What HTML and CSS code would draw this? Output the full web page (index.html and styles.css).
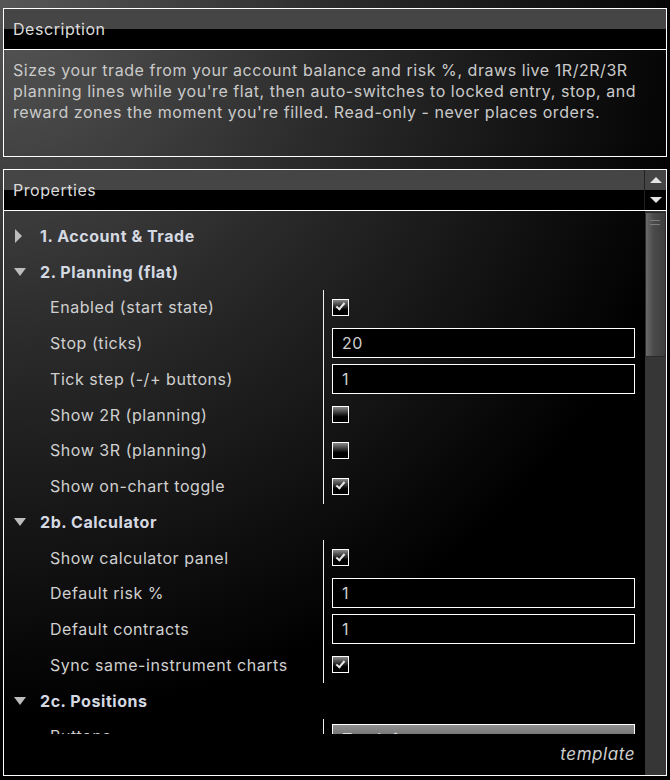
FILE: index.html
```html
<!DOCTYPE html>
<html lang="en">
<head>
    <meta charset="UTF-8">
    <title>Indicator properties</title>
    <link rel="stylesheet" href="styles.css">
</head>
<body>
    <div class="page">
        <div class="panel desc">
            <div class="panel-head"><span class="title">Description</span></div>
            <div class="desc-body">Sizes your trade from your account balance and risk %, draws live 1R/2R/3R planning lines while you're flat, then auto-switches to locked entry, stop, and reward zones the moment you're filled. Read-only - never places orders.</div>
        </div>

        <div class="panel props">
            <div class="panel-head">
                <span class="title">Properties</span>
                <div class="scroll-btns">
                    <span class="sb-up"></span>
                    <span class="sb-down"></span>
                </div>
            </div>
            <div class="props-body">
                <div class="plist">
                    <div class="rows">
                        <div class="cat"><span class="arrow closed"></span>1. Account &amp; Trade</div>

                        <div class="cat"><span class="arrow"></span>2. Planning (flat)</div>
                        <div class="group">
                            <div class="prop"><span class="label">Enabled (start state)</span><span class="value"><span class="check on"></span></span></div>
                            <div class="prop"><span class="label">Stop (ticks)</span><span class="value"><span class="field">20</span></span></div>
                            <div class="prop"><span class="label">Tick step (-/+ buttons)</span><span class="value"><span class="field">1</span></span></div>
                            <div class="prop"><span class="label">Show 2R (planning)</span><span class="value"><span class="check"></span></span></div>
                            <div class="prop"><span class="label">Show 3R (planning)</span><span class="value"><span class="check"></span></span></div>
                            <div class="prop"><span class="label">Show on-chart toggle</span><span class="value"><span class="check on"></span></span></div>
                        </div>

                        <div class="cat"><span class="arrow"></span>2b. Calculator</div>
                        <div class="group">
                            <div class="prop"><span class="label">Show calculator panel</span><span class="value"><span class="check on"></span></span></div>
                            <div class="prop"><span class="label">Default risk %</span><span class="value"><span class="field">1</span></span></div>
                            <div class="prop"><span class="label">Default contracts</span><span class="value"><span class="field">1</span></span></div>
                            <div class="prop"><span class="label">Sync same-instrument charts</span><span class="value"><span class="check on"></span></span></div>
                        </div>

                        <div class="cat"><span class="arrow"></span>2c. Positions</div>
                        <div class="group">
                            <div class="prop"><span class="label">Buttons</span><span class="value"><span class="combo">Top left</span></span></div>
                        </div>
                    </div>
                    <div class="foot">template</div>
                </div>
                <div class="vscroll"><div class="thumb"><i></i><i></i></div></div>
            </div>
        </div>
    </div>
</body>
</html>
```

FILE: styles.css
```css
body {
    margin: 0;
    width: 670px;
    height: 780px;
    overflow: hidden;
    background: radial-gradient(circle at 0 0, #575757 0, #2c2c2c 330px, #000 720px);
    font-family: Inter, "Noto Sans", sans-serif;
    font-size: 16px;
    letter-spacing: 0.55px;
    color: #d2d2d2;
}

.page {
    display: flex;
    flex-direction: column;
    gap: 12px;
    padding: 8px 3px 0 3px;
}

.panel {
    border: 1px solid #fff;
}

.panel-head {
    display: flex;
    height: 40px;
    background: linear-gradient(#454545 50%, #000 50%);
    border-bottom: 1px solid #fff;
}

.title {
    flex: 1;
    padding-left: 9px;
    line-height: 40px;
    color: #dcdcdc;
}

/* description */
.desc {
    height: 147px;
}

.desc-body {
    padding: 10px 9px;
    line-height: 21px;
    color: #cacaca;
}

/* properties */
.props {
    height: 605px;
}

.scroll-btns {
    width: 21px;
    display: flex;
    flex-direction: column;
    border-left: 1px solid #222;
}

.scroll-btns span {
    flex: 1;
    display: flex;
    align-items: center;
    justify-content: center;
}

.sb-up::before, .sb-down::before {
    content: "";
    border-left: 6px solid transparent;
    border-right: 6px solid transparent;
}

.sb-up::before {
    border-bottom: 6px solid #e4e4e4;
}

.sb-down::before {
    border-top: 6px solid #e4e4e4;
}

.props-body {
    display: flex;
    height: 564px;
}

.plist {
    flex: 1;
    display: flex;
    flex-direction: column;
}

.rows {
    flex: 1;
    overflow: hidden;
    padding-top: 7px;
}

.cat {
    height: 35.75px;
    display: flex;
    align-items: center;
    padding-left: 9px;
    font-weight: 700;
    color: #d4d9e2;
}

.arrow {
    width: 14px;
    margin-right: 13px;
    display: flex;
    justify-content: center;
}

.arrow::before {
    content: "";
    border-left: 6.5px solid transparent;
    border-right: 6.5px solid transparent;
    border-top: 8px solid #bdbdbd;
}

.arrow.closed::before {
    border-top: 7px solid transparent;
    border-bottom: 7px solid transparent;
    border-left: 7px solid #bdbdbd;
    border-right: 0;
    margin-right: 4px;
}

.prop {
    height: 35.75px;
    display: grid;
    grid-template-columns: 319px 1fr;
}

.label {
    padding-left: 46px;
    display: flex;
    align-items: center;
    color: #d0d0d0;
    white-space: nowrap;
}

.value {
    border-left: 1px solid #f0f0f0;
    padding: 0 10px 0 8px;
    display: flex;
    align-items: center;
}

.check {
    width: 15px;
    height: 15px;
    border: 1px solid #fff;
    background: linear-gradient(#8a8a8a, #000 65%);
    display: flex;
    align-items: center;
    justify-content: center;
}

.check.on::before {
    content: "";
    width: 7px;
    height: 3px;
    margin-top: -3px;
    border-left: 2px solid #e6e6e6;
    border-bottom: 2px solid #e6e6e6;
    transform: rotate(-50deg);
}

.field {
    flex: 1;
    height: 28px;
    border: 1px solid #fff;
    background: #000;
    padding-left: 9px;
    line-height: 28px;
    color: #cfcfcf;
}

.combo {
    flex: 1;
    height: 28px;
    margin-top: 5px;
    border: 1px solid #fff;
    background: linear-gradient(#8e8e8e, #4a4a4a);
    padding-left: 9px;
    line-height: 28px;
    color: #ddd;
}

.foot {
    height: 41px;
    padding-right: 10px;
    text-align: right;
    line-height: 41px;
    font-style: italic;
    font-size: 17px;
    color: #cfcfcf;
}

.vscroll {
    width: 21px;
    background: #363636;
}

.thumb {
    height: 145px;
    margin-top: 1px;
    border: 1px solid #2a2a2a;
    background: linear-gradient(90deg, #6a6a6a, #4a4a4a 40%, #3e3e3e);
    padding-top: 4px;
    box-sizing: border-box;
}

.thumb i {
    display: block;
    height: 1px;
    margin: 3px 5px 0 4px;
    background: #7c7c7c;
}
```
